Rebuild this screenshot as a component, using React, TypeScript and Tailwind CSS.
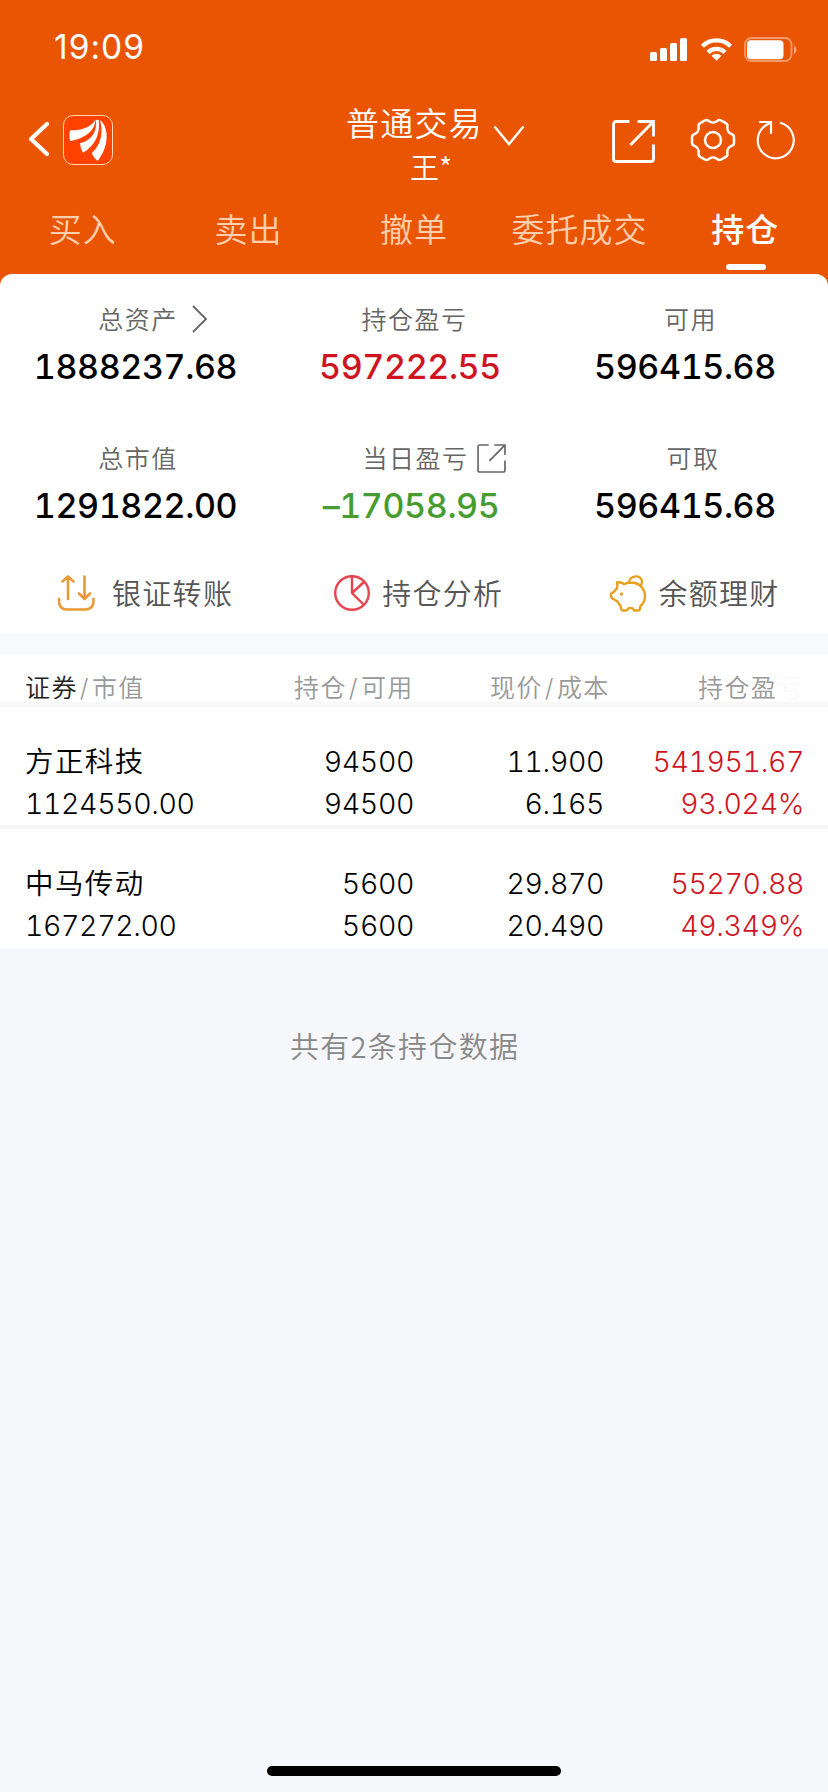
import type { ReactNode } from 'react'
import clsx from 'clsx'

const tabs = ['买入', '卖出', '撤单', '委托成交', '持仓']

const summary = [
  { label: '总资产', value: '1888237.68', extra: 'arrow', pad: 'pl-[2px]', shift: 'mr-[3px]' },
  { label: '持仓盈亏', value: '597222.55', color: 'text-[#d0141f]', pad: 'pl-[7px]', shift: 'mr-[2px]' },
  { label: '可用', value: '596415.68', pad: 'pl-[11px]', shift: 'mr-0' },
  { label: '总市值', value: '1291822.00', pad: 'pl-[2px]', shift: 'mr-[3px]' },
  { label: '当日盈亏', value: '–17058.95', color: 'text-[#479c2f]', extra: 'export', pad: 'pl-[9px]', shift: 'mr-0' },
  { label: '可取', value: '596415.68', pad: 'pl-[16px]', shift: 'mr-0' },
]

const holdings = [
  { name: '方正科技', market: '1124550.00', total: '94500', usable: '94500', price: '11.900', cost: '6.165', profit: '541951.67', rate: '93.024%' },
  { name: '中马传动', market: '167272.00', total: '5600', usable: '5600', price: '29.870', cost: '20.490', profit: '55270.88', rate: '49.349%' },
]

function StatusBar() {
  return (
    <div className="flex h-[92px] items-start justify-between pl-[54px] pr-[30px] text-white">
      <span className="mt-[27px] text-[33.5px] leading-[40px] tracking-[1px]">19:09</span>
      <svg className="mt-[36px]" width="148" height="28" viewBox="0 0 148 28" fill="currentColor">
        <rect x="0" y="16" width="7" height="9" rx="1.5" />
        <rect x="10" y="12" width="7" height="13" rx="1.5" />
        <rect x="20" y="7" width="7" height="18" rx="1.5" />
        <rect x="30" y="2" width="7" height="23" rx="1.5" />
        <g fill="none" stroke="currentColor" strokeWidth="4.4">
          <path d="M52.400 10.2a20 20 0 0 1 28.2 0" />
          <path d="M58 16.3a12.2 12.2 0 0 1 17 0" />
        </g>
        <path d="M66.5 24.8l-5-5a7.4 7.4 0 0 1 10 0z" />
        <rect x="95" y="2" width="46.5" height="23" rx="6.5" fill="none" stroke="currentColor" strokeOpacity="0.4" strokeWidth="1.8" />
        <rect x="97" y="4.2" width="36.5" height="19" rx="4" />
        <path d="M144 9.500c3 1.300 3 7.200 0 8.500z" opacity="0.5" />
      </svg>
    </div>
  )
}

function Logo() {
  return (
    <svg width="50" height="50" viewBox="0 0 150 150">
      <rect x="1.5" y="1.5" width="147" height="147" rx="29" fill="#ff4200" stroke="#ffd9b0" strokeWidth="3" />
      <g fill="#fff">
        <path d="M22 46C52 47 82 38 97 14C97 46 66 70 22 78Q16 62 22 46Z" />
        <path d="M99 15L107 14C113 56 96 92 60 113Q52 101 51 85C84 76 103 52 99 15Z" />
        <path d="M111 16C134 30 144 88 104 138Q93 130 86 115C113 90 122 55 111 16Z" />
      </g>
    </svg>
  )
}

function ExportIcon({ size, stroke }: { size: number; stroke: number }) {
  return (
    <svg width={size} height={size} viewBox="0 0 42 42" fill="none" stroke="currentColor" strokeWidth={stroke}>
      <path d="M17 1.5H4Q1.5 1.5 1.5 4V38Q1.5 40.5 4 40.5H38Q40.5 40.5 40.5 38V24" />
      <path d="M25 1.5H40.5V16M40 2L18 24.5" />
    </svg>
  )
}

function GearIcon() {
  return (
    <svg width="46" height="46" viewBox="-69 -69 138 138" fill="none" stroke="currentColor" strokeWidth="7.5">
      {[0, 60, 120, 180, 240, 300].map((deg) => (
        <path
          key={deg}
          transform={`rotate(${deg})`}
          d="M63 -1V8Q63 15 57 17C45 22 41.5 28 43.2 41Q44.5 47 38.4 50.4L30.6 55"
        />
      ))}
      <circle r="24" />
    </svg>
  )
}

function Header() {
  return (
    <header className="h-[274px] bg-[#ea5504]">
      <StatusBar />
      <div className="flex h-[98px] items-start pl-[28px] pr-[31px] text-white">
        <svg className="mt-[29px]" width="22" height="36" viewBox="0 0 22 36" fill="none" stroke="currentColor" strokeWidth="4.2" strokeLinecap="round" strokeLinejoin="round">
          <path d="M19 3L3 18L19 33" />
        </svg>
        <div className="ml-[13px] mt-[23px]">
          <Logo />
        </div>
        <div className="ml-[233px] w-[136px]">
          <div className="mt-[12px] whitespace-nowrap text-[33px] font-[350] leading-[40px] tracking-[1.2px]">普通交易</div>
          <div className="ml-[64px] mt-[3px] font-['Noto_Sans_CJK_SC',sans-serif] text-[29px] font-[350] leading-[38px]">王*</div>
        </div>
        <svg className="ml-[11px] mt-[33px]" width="32" height="22" viewBox="0 0 32 22" fill="none" stroke="currentColor" strokeWidth="2.4">
          <path d="M1.5 1.5L16 19L30.5 1.5" />
        </svg>
        <div className="ml-[87px] mt-[28px]">
          <ExportIcon size={43} stroke={2.8} />
        </div>
        <div className="ml-[35px] mt-[25px]">
          <GearIcon />
        </div>
        <svg className="ml-[20px] mt-[28px] shrink-0" width="40" height="40" viewBox="0 0 40 40" fill="none" stroke="currentColor" strokeWidth="2.2">
          <path d="M24 2.8A18 18 0 1 1 9.5 5.5L15 2.2" />
          <path d="M3 2H15V14" />
        </svg>
      </div>
      <nav className="grid h-[84px] grid-cols-5">
        {tabs.map((tab) => {
          const active = tab === '持仓'
          return (
            <div
              key={tab}
              className={clsx(
                'flex flex-col items-center pt-[20px] text-[33px] leading-[40px] tracking-[1px]',
                active ? 'font-medium text-white' : 'font-[350] text-[#ffcfae]',
              )}
            >
              <span className="whitespace-nowrap">{tab}</span>
              {active && <i className="ml-[2px] mt-[14px] h-[6px] w-[40px] rounded-full bg-white" />}
            </div>
          )
        })}
      </nav>
    </header>
  )
}

function Summary() {
  return (
    <div className="grid h-[279px] w-[822px] grid-cols-3 content-start pt-[26px]">
      {summary.map(({ label, value, color, extra, pad, shift }) => (
        <div key={label} className="flex h-[139px] flex-col items-center">
          <div className={clsx('relative text-[25px] font-[350] leading-[40px] tracking-[1.5px] text-[#666]', pad)}>
            {label}
            {extra === 'arrow' && (
              <svg className="absolute left-[96px] top-[5px]" width="16" height="28" viewBox="0 0 16 28" fill="none" stroke="currentColor" strokeWidth="1.8">
                <path d="M1 1L14 14L1 27" />
              </svg>
            )}
            {extra === 'export' && (
              <span className="absolute left-[124px] top-[5px]">
                <ExportIcon size={29} stroke={2.4} />
              </span>
            )}
          </div>
          <div className={clsx('mt-[7px] text-[34px] font-[460] leading-[40px] tracking-[-0.4px] tabular-nums', shift, color ?? 'text-black')}>{value}</div>
        </div>
      ))}
    </div>
  )
}

function Action({ label, children }: { label: string; children: ReactNode }) {
  return (
    <div className="flex items-center">
      {children}
      <span className="mt-[3px] text-[29px] font-[350] leading-[40px] tracking-[1.3px] text-[#555]">{label}</span>
    </div>
  )
}

function Actions() {
  return (
    <div className="flex h-[80px] items-center pl-[57px]">
      <Action label="银证转账">
        <svg className="mr-[17px]" width="38" height="38" viewBox="0 0 38 38" fill="none" stroke="#e89a35" strokeWidth="2.6" strokeLinecap="round" strokeLinejoin="round">
          <path d="M11 25V3M5.5 7.500L11 2.5L16.5 7.500M27.5 2.5V24M22 19.5L27.5 25L33 19.500" />
          <path d="M2 25V27Q2 35.500 10 35.500H28Q36.500 35.500 36.500 27V25" />
        </svg>
      </Action>
      <div className="ml-[100px]">
        <Action label="持仓分析">
          <svg className="mr-[11px]" width="38" height="38" viewBox="0 0 38 38" fill="none" stroke="#e64550" strokeWidth="2.4">
            <circle cx="19" cy="19" r="16.800" />
            <path d="M19 2V19L31 31M19 19L31 8" />
          </svg>
        </Action>
      </div>
      <div className="ml-[106px]">
        <Action label="余额理财">
          <svg className="mr-[11px]" width="38" height="38" viewBox="0 0 38 38" fill="none" stroke="#e8a11c" strokeWidth="2.4" strokeLinejoin="round">
            <path d="M8 8.500Q12 7.500 15 10.200Q18 8.800 21 8.800H25C32 10 36 16 36 22Q36 28.500 31.500 32L31 35Q30.500 36.500 29 36.500H26Q24.500 36.500 24 34.500Q21.500 33.200 19 34.500Q18.500 36.500 17 36.500H14Q12.500 36.500 12 34.500L11.500 31.500Q9.500 30 8.500 27.500L3.500 24.500Q2 23.500 2 22V20.500Q2 19 4 18.500Q6 17 8 14Q9 11.500 8 8.500Z" />
            <path d="M20 8.500C21 1 32 0 33 7.500Q33 10 31.500 12" />
            <circle cx="12.500" cy="20" r="0.800" strokeWidth="1.8" />
          </svg>
        </Action>
      </div>
    </div>
  )
}

function TableHead() {
  return (
    <div className="flex h-[48px] items-end overflow-hidden whitespace-nowrap pl-[25px] text-[25px] font-[350] leading-[28px] tracking-[1.4px] text-[#999]">
      <div className="w-[269px]">
        <span className="text-[#222]">证券</span><span className="mx-[2px]">/</span>市值
      </div>
      <div className="w-[196px]">持仓<span className="mx-[2px]">/</span>可用</div>
      <div className="w-[208px]">现价<span className="mx-[2px]">/</span>成本</div>
      <div>持仓盈<span className="text-[#f9f9f9]">亏</span></div>
    </div>
  )
}

function Holdings() {
  return (
    <div className="bg-white">
      {holdings.map((h, i) => (
        <div
          key={h.name}
          className={clsx(
            'grid grid-cols-[239px_150px_190px_200px] content-start gap-y-[2px] pl-[25px] pt-[35px] text-right text-[28.5px] font-[350] leading-[40px] tracking-[-0.4px] tabular-nums text-black',
            i === 0 ? 'h-[122px] border-b-4 border-[#f7f7f9]' : 'h-[120px]',
          )}
        >
          <div className="text-left tracking-[1.4px]">{h.name}</div>
          <div>{h.total}</div>
          <div>{h.price}</div>
          <div className="text-[#d0141f]">{h.profit}</div>
          <div className="text-left">{h.market}</div>
          <div>{h.usable}</div>
          <div>{h.cost}</div>
          <div className="text-[#d0141f]">{h.rate}</div>
        </div>
      ))}
    </div>
  )
}

export default function App() {
  return (
    <div className="flex h-[1792px] w-[828px] flex-col overflow-hidden bg-[#f6f7fa] font-['Inter','Noto_Sans_CJK_SC',sans-serif]">
      <Header />
      <div className="bg-[#ea5504]">
        <div className="h-[360px] rounded-t-[12px] bg-white">
          <Summary />
          <Actions />
        </div>
      </div>
      <div className="h-[20px] bg-[#f9fafc]" />
      <div className="bg-white">
        <TableHead />
      </div>
      <div className="h-[5px] bg-[#f8f8f9]" />
      <Holdings />
      <div className="mt-[76px] pl-[290px] font-['Noto_Sans_CJK_SC',sans-serif] text-[29px] font-[350] leading-[40px] tracking-[1.3px] text-[#888]">
        共有2条持仓数据
      </div>
      <div className="mx-auto mb-[16px] mt-auto h-[10px] w-[294px] rounded-full bg-black" />
    </div>
  )
}
